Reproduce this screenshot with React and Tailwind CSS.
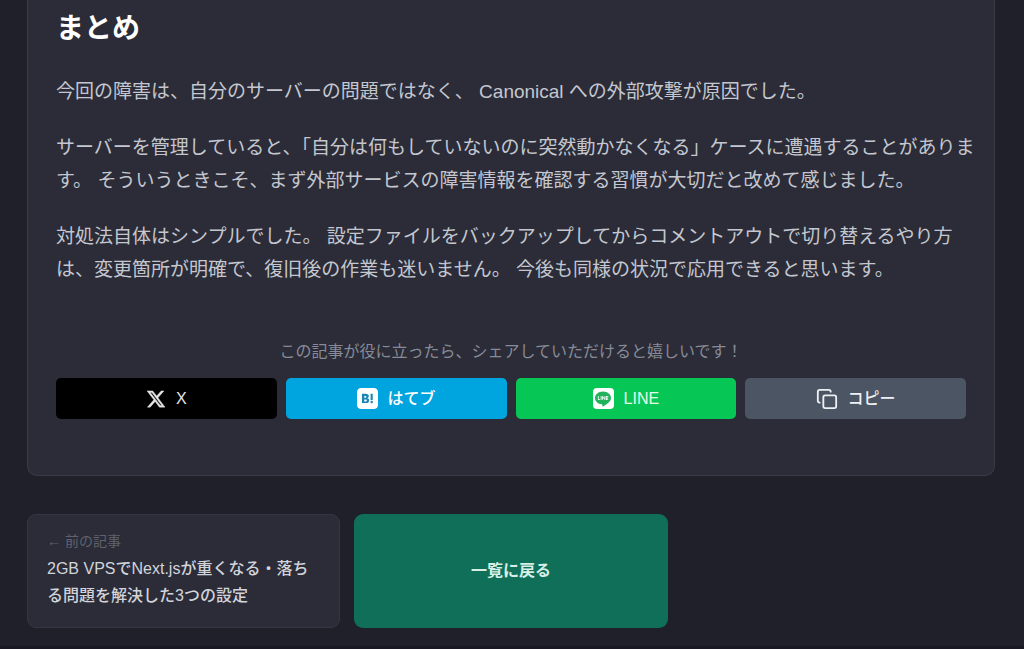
import { Copy } from 'lucide-react'
import { SiHatenabookmark, SiLine } from 'react-icons/si'

const shareClass =
  'flex items-center justify-center gap-[10px] h-[41px] rounded-[5px] text-base font-medium'

function XIcon() {
  return (
    <svg
      width="20"
      height="20"
      viewBox="0 0 24 24"
      fill="currentColor"
      stroke="currentColor"
      strokeWidth="0.5"
      aria-hidden="true"
    >
      <path d="M18.244 2.25h3.308l-7.227 8.26 8.502 11.24H16.17l-5.214-6.817L4.99 21.75H1.68l7.73-8.835L1.254 2.25H8.08l4.713 6.231zm-1.161 17.52h1.833L7.084 4.126H5.117z" />
    </svg>
  )
}

function LineIcon() {
  return (
    <span className="flex items-center justify-center size-[21px] rounded-[4px] bg-white">
      <SiLine size={16} className="text-[#20b35b]" />
    </span>
  )
}

function ShareButtons() {
  return (
    <div className="grid grid-cols-4 gap-[9px]">
      <a href="#x" className={`${shareClass} bg-black text-[#e6e6e6]`}>
        <XIcon />
        <span>X</span>
      </a>
      <a href="#hatena" className={`${shareClass} bg-[#00a4de] text-white`}>
        <SiHatenabookmark size={21} className="rounded-[4px] bg-[#1a86b5]" />
        <span>はてブ</span>
      </a>
      <a href="#line" className={`${shareClass} bg-[#06c755] text-[#e6fbee]`}>
        <LineIcon />
        <span>LINE</span>
      </a>
      <button type="button" className={`${shareClass} bg-[#4b5563] text-[#eef0f4]`}>
        <Copy size={22} strokeWidth={2} />
        <span>コピー</span>
      </button>
    </div>
  )
}

function App() {
  return (
    <div
      lang="ja"
      className="flex min-h-screen flex-col bg-[#20202a] font-['Liberation_Sans','Noto_Sans_CJK_JP',sans-serif]"
    >
      <main className="pl-[27px] pr-[29px] pb-[18px]">
        {/* Article */}
        <article className="rounded-b-[10px] border-x border-b border-[#383a46] bg-[#2b2c37] px-7 pt-[11px] pb-[56px]">
          <h2 className="mb-[28px] text-[28px] leading-[36px] font-bold text-white">まとめ</h2>
          <div className="-mr-2.5 space-y-[23px] text-[19px] leading-[33px] text-[#c4c7d0]">
            <p>今回の障害は、自分のサーバーの問題ではなく、 Canonical への外部攻撃が原因でした。</p>
            <p>
              サーバーを管理していると、「自分は何もしていないのに突然動かなくなる」ケースに遭遇することがありま
              <br />
              す。 そういうときこそ、まず外部サービスの障害情報を確認する習慣が大切だと改めて感じました。
            </p>
            <p>
              対処法自体はシンプルでした。 設定ファイルをバックアップしてからコメントアウトで切り替えるやり方
              <br />
              は、変更箇所が明確で、復旧後の作業も迷いません。 今後も同様の状況で応用できると思います。
            </p>
          </div>

          {/* Share */}
          <p className="mt-[54px] mb-[14px] text-center text-base text-[#878b98]">
            この記事が役に立ったら、シェアしていただけると嬉しいです！
          </p>
          <ShareButtons />
        </article>

        {/* Article navigation */}
        <nav className="mt-[38px] grid grid-cols-3 gap-[14px]">
          <a
            href="#prev"
            className="rounded-[9px] border border-[#353641] bg-[#2b2c37] px-[19px] py-[18px]"
          >
            <p className="mb-[5px] text-sm leading-[17px] text-[#5f626f]">← 前の記事</p>
            <p className="text-base leading-[27px] font-medium text-[#d2d4dc]">
              2GB VPSでNext.jsが重くなる・落ちる問題を解決した3つの設定
            </p>
          </a>
          <a
            href="#list"
            className="flex items-center justify-center rounded-[9px] bg-[#106f58] text-base font-bold text-[#d7efe7]"
          >
            一覧に戻る
          </a>
        </nav>
      </main>
      <footer className="flex-1 bg-[#1a1823]" />
    </div>
  )
}

export default App
